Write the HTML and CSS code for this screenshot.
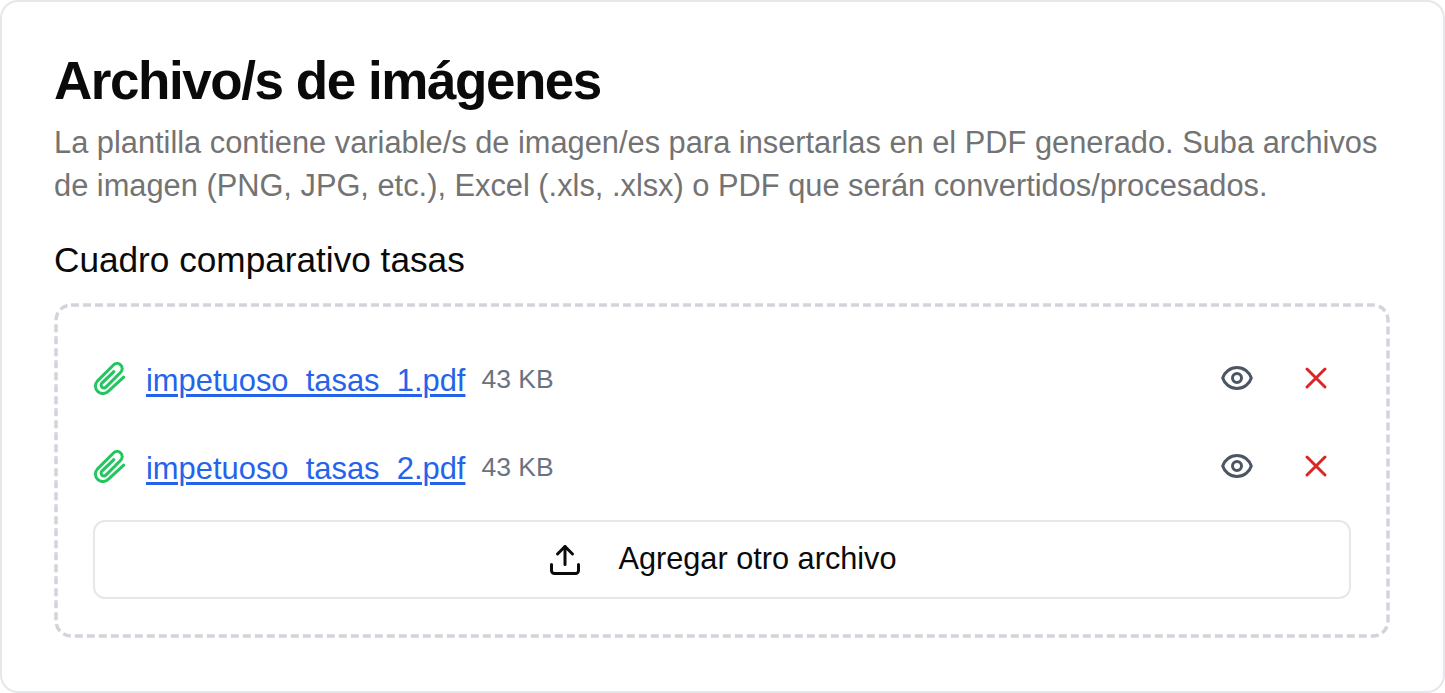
FILE: index.html
```html
<!DOCTYPE html>
<html lang="es">
<head>
<meta charset="utf-8">
<title>Archivo/s de imágenes</title>
<link rel="stylesheet" href="styles.css">
</head>
<body>
<section class="card">
  <h1 class="title">Archivo/s de imágenes</h1>
  <p class="desc">La plantilla contiene variable/s de imagen/es para insertarlas en el PDF generado. Suba archivos de imagen (PNG, JPG, etc.), Excel (.xls, .xlsx) o PDF que serán convertidos/procesados.</p>
  <h2 class="label">Cuadro comparativo tasas</h2>
  <div class="drop">
    <div class="row">
      <svg class="clip" viewBox="0 0 100 100"><path d="M93 46L47 88A22 22 0 0 1 13 58L62 9A15 15 0 0 1 84 31L39 76A8 8 0 0 1 27 64L63 29"/></svg>
      <a class="name" href="#">impetuoso_tasas_1.pdf</a>
      <span class="size">43 KB</span>
      <svg class="icon eye" viewBox="0 0 24 24"><path d="M15 12a3 3 0 11-6 0 3 3 0 016 0z"/><path d="M2.458 12C3.732 7.943 7.523 5 12 5c4.478 0 8.268 2.943 9.542 7-1.274 4.057-5.064 7-9.542 7-4.477 0-8.268-2.943-9.542-7z"/></svg>
      <svg class="icon del" viewBox="0 0 24 24"><path d="M6 18L18 6M6 6l12 12"/></svg>
    </div>
    <div class="row">
      <svg class="clip" viewBox="0 0 100 100"><path d="M93 46L47 88A22 22 0 0 1 13 58L62 9A15 15 0 0 1 84 31L39 76A8 8 0 0 1 27 64L63 29"/></svg>
      <a class="name" href="#">impetuoso_tasas_2.pdf</a>
      <span class="size">43 KB</span>
      <svg class="icon eye" viewBox="0 0 24 24"><path d="M15 12a3 3 0 11-6 0 3 3 0 016 0z"/><path d="M2.458 12C3.732 7.943 7.523 5 12 5c4.478 0 8.268 2.943 9.542 7-1.274 4.057-5.064 7-9.542 7-4.477 0-8.268-2.943-9.542-7z"/></svg>
      <svg class="icon del" viewBox="0 0 24 24"><path d="M6 18L18 6M6 6l12 12"/></svg>
    </div>
    <button class="add" type="button">
      <svg class="icon tray" viewBox="0 0 24 24"><path d="M21 15v4a2 2 0 0 1-2 2H5a2 2 0 0 1-2-2v-4"/><path d="M17 8l-5-5-5 5"/><path d="M12 3v12"/></svg>
      <span class="add-text">Agregar otro archivo</span>
    </button>
  </div>
</section>
</body>
</html>
```
FILE: styles.css
```css
* { box-sizing: border-box; }
html, body { margin: 0; background: #fff; }
body { font-family: "Liberation Sans", Arial, sans-serif; color: #000; }
.card {
  height: 693px;
  width: 1445px;
  padding: 49px 52px 0;
  border: 2px solid #e5e7eb;
  border-radius: 18px;
  background: #fff;
}
.title { margin: 0; font-size: 53px; line-height: 60px; font-weight: 700; color: #0a0a0a; letter-spacing: -1.45px; }
.desc { margin: 10px 0 0; width: 1340px; font-size: 30.8px; line-height: 43px; color: #737373; }
.label { margin: 29px 0 0; font-size: 35.2px; line-height: 48px; font-weight: 400; color: #0a0a0a; }
.drop {
  margin-top: 19px;
  width: 1336px;
  height: 335px;
  padding: 31px 39px 0;
  border-radius: 16px;
  background: url("data:image/svg+xml,%3Csvg xmlns='http://www.w3.org/2000/svg' width='1336' height='335'%3E%3Crect x='2' y='2' width='1332' height='331' rx='15' fill='none' stroke='%23d1d5db' stroke-width='3.5' stroke-dasharray='8 4'/%3E%3C/svg%3E") no-repeat;
}
.row { display: flex; align-items: center; height: 88px; }
.icon { width: 36px; height: 36px; flex: none; fill: none; stroke-width: 2; stroke-linecap: round; stroke-linejoin: round; }
.clip { width: 33px; height: 33px; flex: none; fill: none; stroke: #22c55e; stroke-width: 9; stroke-linecap: round; stroke-linejoin: round; }
.name { margin: 6px 0 0 20px; font-size: 30.9px; color: #2563eb; text-decoration: underline; text-decoration-thickness: 3px; text-underline-offset: 3px; }
.size { margin: 2px 0 0 16px; font-size: 26.5px; color: #6b7280; }
.eye { stroke: #4b5563; margin-left: auto; }
.del { stroke: #dc2626; margin-left: 43px; margin-right: 17px; }
.add {
  display: flex;
  align-items: center;
  justify-content: center;
  gap: 35px;
  width: 100%;
  height: 79px;
  margin-top: 10px;
  padding: 0;
  border: 2px solid #e5e7eb;
  border-radius: 12px;
  background: #fff;
  font: inherit;
  font-size: 30.7px;
  color: #0a0a0a;
}
.add-text { margin-bottom: 2px; }
.tray { stroke: #0a0a0a; }
```
